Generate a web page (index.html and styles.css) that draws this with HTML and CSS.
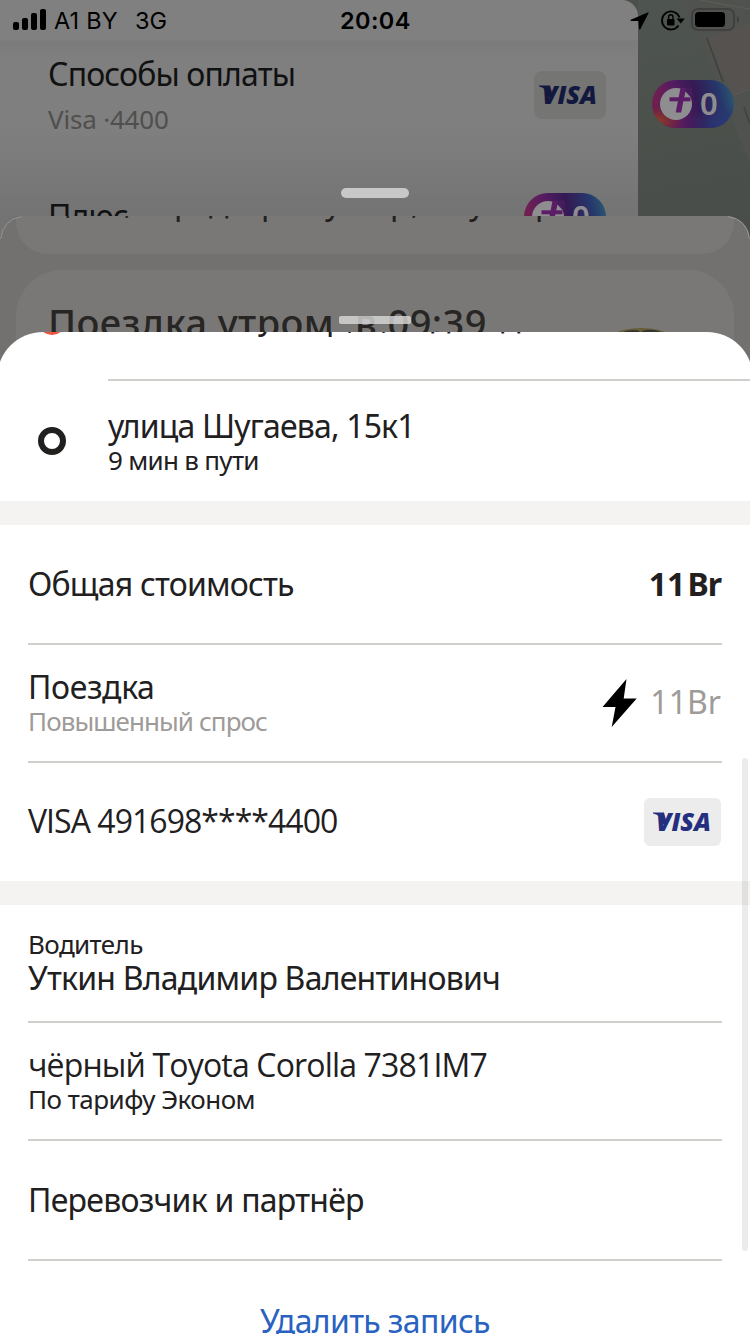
FILE: index.html
```
<!DOCTYPE html>
<html lang="ru">
<head>
<meta charset="utf-8">
<title>Детали поездки</title>
<link rel="stylesheet" href="styles.css">
</head>
<body>
<svg class="defs" aria-hidden="true">
  <defs>
    <linearGradient id="plusBase" x1="0" y1="0.15" x2="1" y2="0">
      <stop offset="0" stop-color="#702050"/>
      <stop offset="0.25" stop-color="#551b62"/>
      <stop offset="0.5" stop-color="#341a54"/>
      <stop offset="0.78" stop-color="#26376b"/>
      <stop offset="1" stop-color="#2c6072"/>
    </linearGradient>
    <radialGradient id="plusWarm" cx="0.06" cy="0.85" r="0.38">
      <stop offset="0" stop-color="#8a4323"/>
      <stop offset="0.5" stop-color="#78273b" stop-opacity="0.8"/>
      <stop offset="1" stop-color="#501d59" stop-opacity="0"/>
    </radialGradient>
    <radialGradient id="plusBlue" cx="0.85" cy="0.9" r="0.4">
      <stop offset="0" stop-color="#2a3774"/>
      <stop offset="1" stop-color="#2a3774" stop-opacity="0"/>
    </radialGradient>
    <symbol id="visa" viewBox="0 0 60 20">
      <path d="M0 .6h11l3 11-4.500 1Q8.500 3.400 0 1.600z"/>
      <text class="visa-text" x="3" y="19" textLength="55" lengthAdjust="spacingAndGlyphs">VISA</text>
    </symbol>
    <symbol id="plus" viewBox="0 0 82 48">
      <rect width="82" height="48" rx="24" fill="url(#plusBase)"/>
      <rect width="82" height="48" rx="24" fill="url(#plusWarm)"/>
      <rect width="82" height="48" rx="24" fill="url(#plusBlue)"/>
      <circle cx="24" cy="24" r="16" fill="#8e8e90"/>
      <path d="M31.500 7.500h9v9.500h-11.500z" fill="#471c5c"/>
      <path d="M33.500 11.500l5 5.500h-6.600z" fill="#8e8e90"/>
      <path d="M17.500 17.300h21v4h-21z" fill="#5b1d66"/>
      <path d="M28.500 8h5.300l-4.600 24.500h-5.500z" fill="#5b1d66"/>
      <text class="plus-count" x="48" y="35">0</text>
    </symbol>
  </defs>
</svg>

<main class="screen">
  <section class="backdrop">
    <div class="drawer">
      <div class="drawer-row">
        <div>
          <div class="title pay-title">Способы оплаты</div>
          <div class="sub pay-sub">Visa ·4400</div>
        </div>
        <div class="card-badge dim"><svg width="60" height="20"><use href="#visa"/></svg></div>
      </div>
      <div class="drawer-row second">
        <div class="title plus-title">Плюс</div>
        <svg width="82" height="48"><use href="#plus"/></svg>
      </div>
    </div>
    <div class="map">
      <svg class="map-art" width="112" height="240" viewBox="0 0 112 240">
        <path d="M45 0L112 164V0z" fill="#50524f"/>
        <path d="M69 38L112 23V88L94 95z" fill="#55524f"/>
        <path d="M69 38l16 44" stroke="#40403d" stroke-width="1.500"/>
        <path d="M106 107l6 17" stroke="#40403d" stroke-width="1.500"/>
        <path d="M62 0q26 5 50 9" fill="none" stroke="#5b5b54" stroke-width="1.500"/>
        <path d="M96 95l16-6" stroke="#5d5b58"/>
      </svg>
      <svg class="map-plus" width="82" height="48"><use href="#plus"/></svg>
    </div>
    <div class="statusbar">
      <svg width="34" height="22" viewBox="0 0 34 22">
        <rect y="13" width="6" height="8" rx="2"/><rect x="9" y="9" width="6" height="12" rx="2"/>
        <rect x="18" y="4" width="6" height="17" rx="2"/><rect x="27" width="6" height="21" rx="2"/>
      </svg>
      <span class="carrier">A1 BY</span>
      <span class="network">3G</span>
      <span class="clock">20:04</span>
      <svg class="status-icons" width="112" height="26" viewBox="0 0 112 26">
        <path d="M17.700 5.400L.8 12.800q-1 .7.300 1.100l7.300.2.600 7.900q.6 1.200 1.300.2L18.600 6q.1-.9-.9-.6z"/>
        <path d="M48.500 18.500a9 9 0 1 1 1-8" fill="none" stroke="#000" stroke-width="1.800"/>
        <path d="M46.500 11.500h8.300l-4 5z"/>
        <rect x="37" y="12" width="7.500" height="6.500" rx="1"/>
        <path d="M38.600 12.500V10a2.200 2.200 0 0 1 4.400 0v2.500" fill="none" stroke="#000" stroke-width="1.400"/>
        <rect x="62" y="2" width="42" height="21" rx="6" fill="none" stroke="#40413f" stroke-width="2"/>
        <rect x="65" y="5" width="30" height="15" rx="3.500"/>
        <path d="M107 9q2 1 2 3.500t-2 3.500z" fill="#3c3c3c"/>
      </svg>
    </div>
    <div class="grabber"></div>
  </section>

  <section class="history">
    <svg class="sliver-a" width="750" height="6">
      <text class="sliver-text" x="65 124 174 209 261 325 390 411 469 535" y="-2">,,рдрур,ур</text>
    </svg>
    <div class="trip-card previous"></div>
    <div class="trip-card current">
      <h1 class="trip-title">Поездка утром, в 09:39</h1>
      <svg class="car" width="46" height="12" viewBox="0 0 46 12">
        <path d="M0 3.500Q10 0 23 0T46 3.500V12H0z" fill="#665e38"/>
        <path d="M2 5Q12 1 20 2.500q3 1 2 9.500H0zM24 3Q34 0 43 4l3 8H24z" fill="#33332f"/>
      </svg>
    </div>
    <div class="grabber square"></div>
    <svg class="edge" width="750" height="24" viewBox="0 0 750 24">
      <path d="M.5 23Q3 3 22 .5M728 .5Q747 3 749.500 23" fill="none" stroke="#979796"/>
    </svg>
  </section>

  <section class="details">
    <svg class="sliver-b" width="750" height="5">
      <circle cx="52" cy="-11" r="14" fill="#f0543f"/>
      <text class="sliver-text" x="258 326 347 381 431 501" y="-3.500">ур,,дд</text>
    </svg>
    <div class="stop">
      <span class="stop-dot"></span>
      <div class="stop-text">
        <div class="title addr">улица Шугаева, 15к1</div>
        <div class="sub dur">9 мин в пути</div>
      </div>
    </div>
    <div class="group">
      <div class="row single">
        <div class="title total">Общая стоимость</div>
        <div class="price bold"><span>11</span><span>Br</span></div>
      </div>
      <div class="row double">
        <div>
          <div class="title ride">Поездка</div>
          <div class="sub muted surge">Повышенный спрос</div>
        </div>
        <div class="price muted ride-price">
          <svg class="bolt" width="36" height="49" viewBox="0 0 36 49"><path d="M24.500 0L.500 28h13L9.700 48 34.700 19.500h-13z"/></svg>
          <span>11</span><span>Br</span>
        </div>
      </div>
      <div class="row card last">
        <div class="title pan">VISA 491698****4400</div>
        <div class="card-badge"><svg width="60" height="20"><use href="#visa"/></svg></div>
      </div>
    </div>
    <div class="group">
      <div class="row double">
        <div class="driver">
          <div class="sub driver-label">Водитель</div>
          <div class="title driver-name">Уткин Владимир Валентинович</div>
        </div>
      </div>
      <div class="row double">
        <div>
          <div class="title auto">чёрный Toyota Corolla 7381IM7</div>
          <div class="sub tariff">По тарифу Эконом</div>
        </div>
      </div>
      <div class="row single">
        <div class="title partner">Перевозчик и партнёр</div>
      </div>
      <div class="title delete">Удалить запись</div>
    </div>
    <div class="scrollbar"></div>
  </section>
</main>
</body>
</html>
```
FILE: styles.css
```
* { box-sizing: border-box; }
body { margin: 0; font-family: "Noto Sans", "Liberation Sans", sans-serif; color: #21201f; }
svg { display: block; flex: none; }
.defs { position: absolute; width: 0; height: 0; }
.screen { width: 750px; height: 1334px; overflow: hidden; background: #fff; }

.title { font-size: 32px; line-height: 36px; white-space: nowrap; }
.sub { font-size: 26px; line-height: 32px; white-space: nowrap; }
.muted { color: #9e9b98; }

/* Dimmed menu and map */
.backdrop { position: relative; display: flex; height: 240px; background: #4b504c; }
.drawer {
  width: 638px; padding: 56px 32px 0 48px; border-radius: 0 16px 0 0; color: #111;
  background: linear-gradient(#808080 0 40px, #7b7b7b 41px, #7f7f7f 60px, #7f7f7f 130px, #737373 216px);
}
.drawer-row { display: flex; justify-content: space-between; height: 137px; }
.drawer .card-badge { margin-top: 15px; }
.drawer .sub { margin-top: 11px; color: #504f4d; }
.drawer .second .title { margin-top: 5px; }
.map { position: relative; z-index: 0; flex: 1; padding: 80px 0 0 14px; background: linear-gradient(170deg, #4e544f, #494d49); }
.map-art { position: absolute; left: 0; top: 0; }
.map-plus { position: relative; }
.plus-count { font: 600 31px "Noto Sans", sans-serif; fill: #8e8e90; }
.statusbar {
  position: absolute; inset: 0 0 auto 0; z-index: 1; display: flex; height: 40px; padding: 9px 0 0 13px;
  font: 400 23.5px/23px Inter, "Liberation Sans", sans-serif; color: #000;
}
.carrier { width: 81px; margin-left: 7px; letter-spacing: 0.2px; }
.network { width: 205px; }
.clock { font-weight: 600; font-size: 23.5px; letter-spacing: 0.4px; }
.status-icons { margin: -2px 8px 0 auto; }
.grabber { position: absolute; left: 341px; top: 188px; width: 68px; height: 10px; border-radius: 5px; background: #c8c8c8; }

/* Dimmed ride history sheet */
.history {
  position: relative; z-index: 1; height: 146px; margin-top: -24px; overflow: hidden;
  border-radius: 24px 24px 0 0; background: #73716f;
}
.edge { position: absolute; left: 0; top: 0; }
.trip-card { width: 718px; margin: 0 16px; background: #7a7876; }
.previous { height: 32px; border-radius: 0 0 46px 46px; }
.sliver-a { background: #7a7876; clip-path: inset(0 16px); }
.sliver-text { font: 32px "Noto Sans", sans-serif; fill: #21201f; }
.current { display: flex; justify-content: space-between; height: 92px; margin-top: 16px; padding: 28px 70px 0 32px; border-radius: 46px 46px 0 0; }
.trip-title { margin: 0; font-size: 38px; line-height: 48px; font-weight: 500; letter-spacing: 0.4px; white-space: nowrap; color: #272624; }
.car { margin-top: 30px; }
.square { left: 339px; top: 100px; width: 72px; height: 8px; border-radius: 2px; background: rgba(215, 215, 215, 0.82); }

/* Ride details sheet */
.details {
  position: relative; z-index: 2; height: 1002px; margin: -30px -3px 0; padding: 0 3px; overflow: hidden;
  border-radius: 46px 46px 0 0; background: #fff;
}
.stop { display: flex; height: 164px; padding-left: 38px; }
.stop-dot { width: 28px; height: 28px; margin-top: 90px; border: 6px solid #21201f; border-radius: 50%; }
.stop-text { flex: 1; height: 122px; margin: 42px 0 0 42px; padding-top: 27px; border-top: 2px solid #cfcfcb; }
.group { border-top: 24px solid #f4f3f2; padding: 0 28px; }
.row { display: flex; justify-content: space-between; border-bottom: 2px solid #cfcfcb; }
.row.single { height: 120px; padding-top: 41px; }
.row.double { height: 118px; padding-top: 24px; }
.row.card { height: 118px; padding-top: 40px; }
.row.last { border-bottom: 0; }
.driver { margin-top: -1px; }
.price { display: flex; margin-right: 1px; font-size: 32px; line-height: 36px; }
.price.bold { gap: 2px; font-weight: 700; }
.price.bold span:last-child { letter-spacing: -1px; }
.ride-price { margin-top: 15px; }
.ride-price .bolt { margin: -5px 12px 0 0; fill: #000; }
.card-badge { display: flex; align-items: center; justify-content: center; width: 77px; height: 48px; border-radius: 6px; background: #ececec; fill: #252f80; }
.row .card-badge { margin: -5px 1px 0 0; }
.card-badge.dim { width: 72px; padding-right: 3px; background: #757573; fill: #12183f; border-radius: 8px; }
.visa-text { font: italic 800 25.5px "Open Sans", sans-serif; }
.delete { margin-top: 42px; padding-left: 232px; color: #2962c0; }
.scrollbar { position: absolute; right: 5px; top: 426px; width: 6px; height: 493px; border-radius: 3px; background: rgba(0, 0, 0, 0.08); }

/* Tracking per label */
.pay-title { letter-spacing: -0.84px; }
.pay-sub { letter-spacing: -0.19px; }
.plus-title { letter-spacing: -1px; }
.addr { letter-spacing: -0.83px; }
.dur { letter-spacing: -0.7px; }
.total { letter-spacing: -0.8px; }
.ride { letter-spacing: -0.4px; }
.surge { letter-spacing: -0.92px; }
.pan { font-family: "Open Sans", sans-serif; letter-spacing: -0.96px; }
.driver-label { letter-spacing: -0.6px; }
.driver-name { letter-spacing: -0.78px; }
.auto { font-family: "Open Sans", sans-serif; letter-spacing: -0.84px; }
.tariff { letter-spacing: -0.5px; }
.partner { letter-spacing: -0.76px; }
.delete { letter-spacing: -0.65px; }
```
